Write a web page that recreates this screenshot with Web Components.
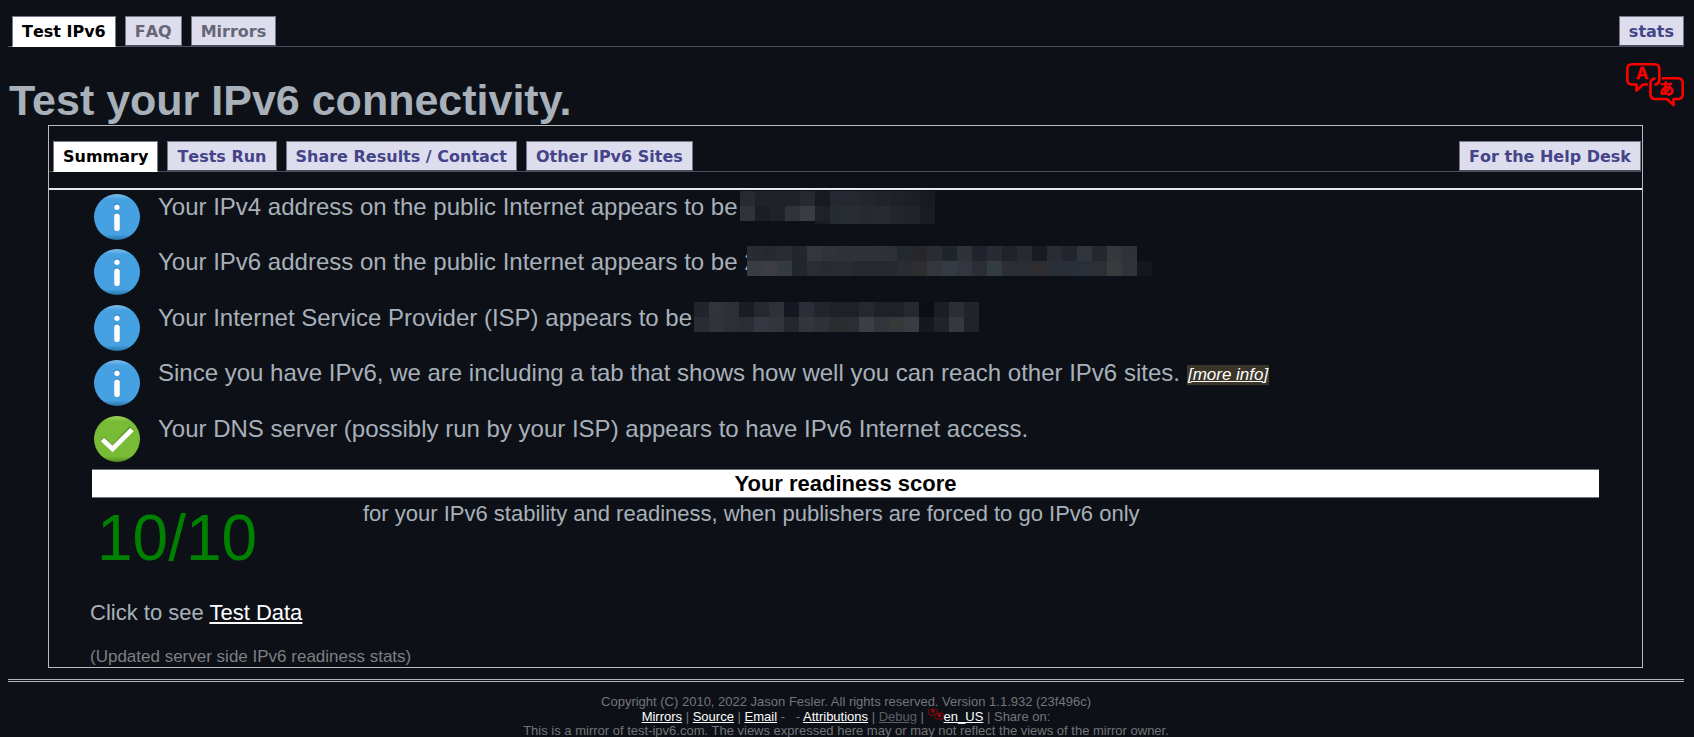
<!DOCTYPE html>
<html lang="en">
<head>
<meta charset="utf-8">
<title>Test your IPv6.</title>
<style>
html { background: #0d1117; }
body { margin: 0 10px 0 8px; font-family: "Liberation Sans", Arial, sans-serif; color: #a8b0b9; background: #0d1117; }
</style>
</head>
<body>
<ipv6-page></ipv6-page>
<script>
const define = (name, html, setup) => {
  const tpl = document.createElement('template');
  tpl.innerHTML = html;
  customElements.define(name, class extends HTMLElement {
    constructor() {
      super();
      this.attachShadow({ mode: 'open' }).append(tpl.content.cloneNode(true));
    }
    connectedCallback() { if (setup) setup(this, this.shadowRoot); }
  });
};

define('tab-bar', `
<style>
:host { display: flex; align-items: flex-start; gap: 9px; padding: 0 0 0 4px; border-bottom: 1px solid #4d505c; height: 30px; }
</style><slot></slot>`);

define('tab-item', `
<style>
:host { display: block; }
:host([end]) { margin-left: auto; }
a { display: block; box-sizing: border-box; height: 30px; padding: 0 9px; font: bold 16px/29px "DejaVu Sans", Verdana, sans-serif; font-kerning: none; color: #448; background: #dde; border: 1px solid #778; border-bottom-color: #4d505c; text-decoration: none; white-space: nowrap; }
:host([muted]) a { color: #667; }
:host([active]) a { height: 31px; color: #000; background: #fff; border-bottom-color: #fff; }
</style><a href="#"><slot></slot></a>`);

define('language-icon', `
<style>
:host { display: inline-block; width: 58px; height: 44px; }
svg { display: block; width: 100%; height: 100%; }
text { fill: #f00; font-weight: bold; }
.latin { font-family: "Liberation Sans", sans-serif; font-size: 17px; }
.kana { font-family: "Noto Sans CJK JP", sans-serif; font-size: 15px; }
</style>
<svg viewBox="0 0 58 44" fill="none" stroke="#f00" stroke-width="2.6" stroke-linejoin="round" stroke-linecap="round">
<path d="M21 21.5H17L10.5 27.5V21.5H6Q1.300 21.500 1.300 17V6Q1.300 1.300 6 1.300H28.500Q33.300 1.300 33.300 6V17Q33.300 20.500 29.500 21.500"/>
<path d="M28.500 15.500Q24.500 16.500 24.500 20V31.500Q24.500 36 29.500 36H41L47.500 42V36H52Q56.700 36 56.700 31V20Q56.700 15.200 52 15.200H37"/>
<g stroke-width=".5"><text class="latin" x="10" y="16">A</text><text class="kana" x="33" y="31">あ</text></g>
</svg>`);

define('status-icon', `
<style>
:host { display: block; width: 48px; height: 48px; }
svg { display: block; width: 100%; height: 100%; }
.ok, :host([kind=ok]) .info { display: none; }
:host([kind=ok]) .ok { display: inline; }
</style>
<svg viewBox="0 0 48 48">
<defs>
<linearGradient id="b" x2="0" y2="1"><stop offset="0" stop-color="#7fbdea"/><stop offset=".12" stop-color="#45a1e2"/><stop offset=".88" stop-color="#45a1e2"/><stop offset="1" stop-color="#2b709f"/></linearGradient>
<linearGradient id="g" x2="0" y2="1"><stop offset="0" stop-color="#a4d45f"/><stop offset=".12" stop-color="#78bb35"/><stop offset=".88" stop-color="#78bb35"/><stop offset="1" stop-color="#548623"/></linearGradient>
</defs>
<g class="info"><circle cx="24" cy="24" r="23" fill="url(#b)"/><g fill="#2d78ab"><circle cx="24" cy="13.500" r="3"/><rect x="21" y="19.500" width="6" height="18" rx="3"/></g><g fill="#fff"><circle cx="24" cy="14.200" r="2.700"/><rect x="21.200" y="20.500" width="5.600" height="17.500" rx="2.500"/></g></g>
<g class="ok"><circle cx="24" cy="24" r="23" fill="url(#g)"/><path d="M9.500 23.500L19.500 33.500L38.500 13" fill="none" stroke="#578b25" stroke-width="5"/><path d="M9.500 24.500L19.500 34L39 14.500" fill="none" stroke="#fff" stroke-width="4.800"/></g>
</svg>`);

define('result-row', `
<style>
:host { display: grid; grid-template-columns: 48px 1fr; column-gap: 17px; font-size: 24px; line-height: 28px; white-space: nowrap; }
status-icon { margin-top: 3px; }
p { margin: 3px 0 0; display: flex; align-items: flex-start; }
</style>
<status-icon></status-icon><p><slot></slot></p>`, (el, root) => {
  root.querySelector('status-icon').setAttribute('kind', el.getAttribute('kind') || 'info');
});

define('pixel-mask', `
<style>
:host { display: grid; grid-auto-columns: 15px; grid-template-rows: 15px 15px; grid-auto-rows: 3px; }
i { display: block; }
</style>`, (el, root) => {
  el.getAttribute('cells').split('|').forEach((line, r) => {
    line.trim().split(' ').forEach((v, c) => {
      if (v === '-') return;
      const cell = document.createElement('i');
      cell.style.cssText = `grid-area:${r + 1}/${c + 1};background:#${v}`;
      root.append(cell);
    });
  });
});

define('readiness-score', `
<style>
:host { display: block; margin: 0 2px; }
h2 { margin: 0; height: 27px; font-size: 22px; line-height: 27px; text-align: center; color: #000; background: #fff; border: solid #6f7277; border-width: 1px 0; }
div { display: grid; grid-template-columns: 271px 1fr; height: 102px; }
strong { padding: 4px 0 0 5px; font-weight: normal; font-size: 64px; line-height: 72px; color: #008000; }
span { padding-top: 3px; font-size: 22px; line-height: 26px; }
</style>
<h2>Your readiness score</h2>
<div><strong>10/10</strong><span>for your IPv6 stability and readiness, when publishers are forced to go IPv6 only</span></div>`);

define('page-footer', `
<style>
:host { display: block; margin-top: 11px; padding-top: 13px; border-top: 3px double #b4b6b9; text-align: center; font-size: 13px; line-height: 14px; color: #737578; white-space: nowrap; }
p { margin: 0; }
a { color: #fff; }
a.off { color: #5c5f64; }
language-icon { width: 16px; height: 12px; opacity: .7; }
</style>
<p>Copyright (C) 2010, 2022 Jason Fesler. All rights reserved. Version 1.1.932 (23f496c)</p>
<p><a href="#">Mirrors</a> | <a href="#">Source</a> | <a href="#">Email</a> - &nbsp; - <a href="#">Attributions</a> | <a class="off" href="#">Debug</a> | <language-icon></language-icon><a href="#">en_US</a> | Share on:</p>
<p>This is a mirror of test-ipv6.com. The views expressed here may or may not reflect the views of the mirror owner.</p>`);

define('ipv6-page', `
<style>
:host { display: block; padding-top: 16px; }
header { display: flex; justify-content: space-between; height: 78px; }
h1 { margin: 0; padding: 27px 0 0 1px; font-size: 43px; line-height: 52px; }
header button { all: unset; height: 44px; margin-top: 16px; cursor: pointer; }
main { display: block; margin: 0 41px 0 40px; border: 1px solid #b9bbbd; padding-top: 15px; }
section { margin-top: 16px; border-top: 2px solid #e8e8e8; padding: 0 41px; }
main tab-bar { margin-right: 1px; }
.results { display: grid; grid-auto-rows: 1fr; height: 277px; margin-bottom: 2px; padding-left: 3px; }
.more { margin: 6px 0 0 7px; padding: 0 1px; font-size: 17px; line-height: 20px; font-style: italic; color: #fff; background: #3b3529; }
.data { margin: 0; font-size: 22px; line-height: 26px; }
.data a { color: #fff; }
small { display: block; margin-top: 20px; font-size: 17px; line-height: 21px; color: #7d7f82; }
pixel-mask { margin: -2px 0 0 2px; }
pixel-mask.over { margin-left: -11px; }
</style>
<nav><tab-bar><tab-item active>Test IPv6</tab-item><tab-item muted>FAQ</tab-item><tab-item muted>Mirrors</tab-item><tab-item end>stats</tab-item></tab-bar></nav>
<header><h1>Test your IPv6 connectivity.</h1><button aria-label="Language"><language-icon></language-icon></button></header>
<main>
<tab-bar><tab-item active>Summary</tab-item><tab-item>Tests Run</tab-item><tab-item>Share Results / Contact</tab-item><tab-item>Other IPv6 Sites</tab-item><tab-item end>For the Help Desk</tab-item></tab-bar>
<section>
<div class="results">
<result-row>Your IPv4 address on the public Internet appears to be<pixel-mask cells="272a31 1f2229 1f2229 1f2229 26292f 181a21 252830 25282e 23272d 212329 1e2127 1c1f25 181a20|30343a 1c1e23 1f2226 30333a 393c43 1f2128 272b32 282c33 26292f 272a30 23262d 202329 191c22|- - - - - 1a1c23 272b32 282c33 26292f 272a30 23262d 202329 191c22"></pixel-mask></result-row>
<result-row>Your IPv6 address on the public Internet appears to be 2<pixel-mask class="over" cells="282b32 262930 292c33 23262d 33363c 303339 2e3137 2f3238 2e3137 2d3037 24292f 272628 292c33 20242b 2f3239 20232b 282b32 20232a 272a32 191b22 292c33 22252d 30343b 24272e 34373c 2f3239|393c42 3c3e44 343a41 23262c 2a2d33 282b31 292c32 26292e 25282e 25282e 292c31 2e2d2f 33363d 343b43 32363e 2b2e35 333b43 2b2e35 2a2d34 2e2c2e 292f36 2a2e36 29303a 2c2f36 383a3b 30333a 15171e"></pixel-mask></result-row>
<result-row>Your Internet Service Provider (ISP) appears to be<pixel-mask cells="21242b 32343b 2d3037 1b1d24 25282f 2e3138 151820 2b2e36 22252c 1e2127 1e2228 25282f 1e2128 1e2228 25282f 0b0e16 1c1e26 2b2e36 21242b|292c33 30333a 2c2f36 2a2d33 353840 32353c 24272e 32353c 2e3138 2a2c2d 2a2d33 3b3e46 30343b 363839 393c43 15181f 20232a 353841 20232a"></pixel-mask></result-row>
<result-row>Since you have IPv6, we are including a tab that shows how well you can reach other IPv6 sites. <a class="more" href="#">[more info]</a></result-row>
<result-row kind="ok">Your DNS server (possibly run by your ISP) appears to have IPv6 Internet access.</result-row>
</div>
<readiness-score></readiness-score>
<p class="data">Click to see <a href="#">Test Data</a></p>
<small>(Updated server side IPv6 readiness stats)</small>
</section>
</main>
<page-footer></page-footer>`);
</script>
</body>
</html>
